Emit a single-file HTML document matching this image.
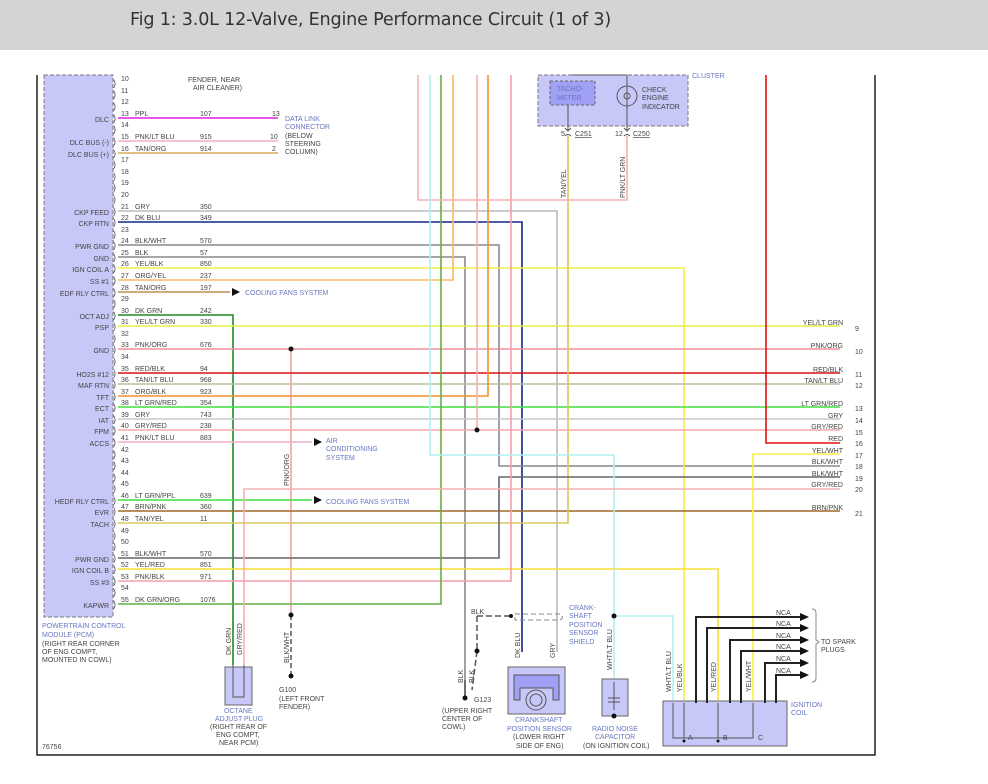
<!DOCTYPE html>
<html><head><meta charset="utf-8"><style>
html,body{margin:0;padding:0;background:#fff;width:988px;height:784px;overflow:hidden}
.hdr{position:absolute;left:0;top:0;width:988px;height:50px;background:#d4d4d4}
.hdr span{position:absolute;left:130px;top:10px;font:17.6px "DejaVu Sans","Liberation Sans",sans-serif;color:#333;letter-spacing:-0.2px}
svg{position:absolute;left:0;top:0}
text{font-family:"Liberation Sans",sans-serif;font-size:7px;fill:#444}
.b{fill:#6878c0}
.r{text-anchor:end}
</style></head><body>
<div class="hdr"><span>Fig 1: 3.0L 12-Valve, Engine Performance Circuit (1 of 3)</span></div>
<svg width="988" height="784" viewBox="0 0 988 784">
<g fill="none">
<path d="M37 75V755H875V75" stroke="#222" stroke-width="1.5"/>
<rect x="44" y="75" width="69" height="542" fill="#c8c8f8" stroke="#777" stroke-dasharray="4,2"/>
<rect x="538" y="75" width="150" height="51" fill="#c8c8f8" stroke="#777" stroke-dasharray="4,2"/>
<rect x="550" y="81" width="45" height="24" fill="#a0a0f4" stroke="#666" stroke-dasharray="3,2"/>
<path d="M572 75H627M568 105V130M627 75V130" stroke="#555"/>
<circle cx="627" cy="96" r="10" stroke="#555"/>
<circle cx="627" cy="96" r="3" stroke="#555"/>
<path d="M565 128l3 3 3-3M624 128l3 3 3-3M565 136q3-3 6 0M624 136q3-3 6 0" stroke="#555"/>

<g stroke-width="1.6">
<path d="M118 118H278" stroke="#e020e0"/>
<path d="M118 141H278" stroke="#f4b0c0"/>
<path d="M118 153H278" stroke="#d8a860"/>
<path d="M118 211H557V652" stroke="#bbb"/>
<path d="M118 222H522V652" stroke="#102888"/>
<path d="M118 245H499V466H840" stroke="#888"/>
<path d="M118 257H465V700" stroke="#888"/>
<path d="M118 268H684V700" stroke="#f0f040"/>
<path d="M118 280H453V75" stroke="#f8b860"/>
<path d="M118 292H230" stroke="#c09050"/>
<path d="M118 315H233V665" stroke="#208a20"/>
<path d="M118 326H840" stroke="#e8f040"/>
<path d="M118 349H840" stroke="#f4909a"/>
<path d="M291 349V615" stroke="#f4a0a0"/>
<path d="M118 373H840" stroke="#d81010"/>
<path d="M118 384H840" stroke="#b8c0a0"/>
<path d="M118 396H488V75" stroke="#f09030"/>
<path d="M118 407H840" stroke="#40e040"/>
<path d="M118 419H840" stroke="#c8c8c8"/>
<path d="M118 430H840" stroke="#f4a8a8"/>
<path d="M477 430V75" stroke="#f4b0b0"/>
<path d="M118 442H312" stroke="#f0b0c8"/>
<path d="M118 500H312" stroke="#40e040"/>
<path d="M118 511H840" stroke="#a06828"/>
<path d="M118 523H568V136" stroke="#d8c860"/>
<path d="M118 558H499V477H840" stroke="#666"/>
<path d="M118 569H718V700" stroke="#f8e030"/>
<path d="M118 581H511V75" stroke="#f4a0a8"/>
<path d="M118 604H441V75" stroke="#60b040"/>
<path d="M418 75V200H627V136" stroke="#f4b0b0"/>
<path d="M430 75V455H614V616H673V700" stroke="#b0f0f0"/>
<path d="M614 616V682" stroke="#b0f0f0"/>
<path d="M244 665V489H840" stroke="#f4b0b0"/>
<path d="M766 75V443H840" stroke="#e01010"/>
<path d="M840 454H753V700" stroke="#f8f040"/>
</g>
<path d="M291 615V676" stroke="#555" stroke-width="1.5" stroke-dasharray="5,3"/>
<path d="M477 616H511M477 616V651M477 651L472 690" stroke="#555" stroke-width="1.5" stroke-dasharray="6,3"/>
<path d="M465 680V700" stroke="#555" stroke-width="1.5"/>
<path d="M515 614H560q5 3 0 6H515z" stroke="#888" stroke-dasharray="5,3"/>
<rect x="225" y="667" width="27" height="38" fill="#c8c8f8" stroke="#666"/>
<path d="M233 665V697H244V665" stroke="#555"/>
<rect x="508" y="667" width="57" height="47" fill="#c8c8f8" stroke="#666"/>
<path d="M514 675H559V700H553V688H520V700H514Z" fill="#a0a0f4" stroke="#555"/>
<circle cx="536" cy="700" r="10" fill="#c8c8f8" stroke="#555"/>
<circle cx="536" cy="700" r="6" stroke="#555"/>
<rect x="602" y="679" width="26" height="37" fill="#c8c8f8" stroke="#666"/>
<path d="M614 682V710M608 698H620M608 702H620" stroke="#555"/>
<rect x="663" y="701" width="124" height="45" fill="#c8c8f8" stroke="#666"/>
<path d="M673 703V738H753V703M684 703V738M718 703V738" stroke="#555"/>
<g stroke="#222" stroke-width="2">
<path d="M696 703V617H806M707 703V628H806M730 703V640H806M741 703V651H806M765 703V663H806M776 703V675H806"/>
</g>
<g fill="#111">
<path d="M800 613l9 4-9 4zM800 624l9 4-9 4zM800 636l9 4-9 4zM800 647l9 4-9 4zM800 659l9 4-9 4zM800 671l9 4-9 4z"/>
<path d="M232 288l8 4-8 4zM314 438l8 4-8 4zM314 496l8 4-8 4z"/>
<circle cx="291" cy="349" r="2.5"/><circle cx="291" cy="615" r="2.5"/><circle cx="477" cy="430" r="2.5"/>
<circle cx="477" cy="651" r="2.5"/><circle cx="511" cy="616" r="2"/><circle cx="614" cy="616" r="2.5"/>
<circle cx="291" cy="676" r="2.5"/><circle cx="465" cy="698" r="2.5"/><circle cx="614" cy="716" r="2.5"/>
<circle cx="684" cy="741" r="1.5"/><circle cx="718" cy="741" r="1.5"/>
</g>
<path d="M812 609q4 0 4 4V640l3 2-3 2V678q0 4-4 4" stroke="#888"/>
</g>

<g>
<text x="121" y="81">10</text><text x="121" y="93">11</text><text x="121" y="104">12</text><text x="121" y="116">13</text>
<text x="121" y="127">14</text><text x="121" y="139">15</text><text x="121" y="151">16</text><text x="121" y="162">17</text>
<text x="121" y="174">18</text><text x="121" y="185">19</text><text x="121" y="197">20</text><text x="121" y="209">21</text>
<text x="121" y="220">22</text><text x="121" y="232">23</text><text x="121" y="243">24</text><text x="121" y="255">25</text>
<text x="121" y="266">26</text><text x="121" y="278">27</text><text x="121" y="290">28</text><text x="121" y="301">29</text>
<text x="121" y="313">30</text><text x="121" y="324">31</text><text x="121" y="336">32</text><text x="121" y="347">33</text>
<text x="121" y="359">34</text><text x="121" y="371">35</text><text x="121" y="382">36</text><text x="121" y="394">37</text>
<text x="121" y="405">38</text><text x="121" y="417">39</text><text x="121" y="428">40</text><text x="121" y="440">41</text>
<text x="121" y="452">42</text><text x="121" y="463">43</text><text x="121" y="475">44</text><text x="121" y="486">45</text>
<text x="121" y="498">46</text><text x="121" y="509">47</text><text x="121" y="521">48</text><text x="121" y="533">49</text>
<text x="121" y="544">50</text><text x="121" y="556">51</text><text x="121" y="567">52</text><text x="121" y="579">53</text>
<text x="121" y="590">54</text><text x="121" y="602">55</text>
</g>
<g>
<text x="113" y="86" style="font-size:9px">)</text><text x="113" y="97" style="font-size:9px">)</text><text x="113" y="109" style="font-size:9px">)</text><text x="113" y="121" style="font-size:9px">)</text>
<text x="113" y="132" style="font-size:9px">)</text><text x="113" y="144" style="font-size:9px">)</text><text x="113" y="156" style="font-size:9px">)</text><text x="113" y="167" style="font-size:9px">)</text>
<text x="113" y="179" style="font-size:9px">)</text><text x="113" y="190" style="font-size:9px">)</text><text x="113" y="202" style="font-size:9px">)</text><text x="113" y="214" style="font-size:9px">)</text>
<text x="113" y="225" style="font-size:9px">)</text><text x="113" y="237" style="font-size:9px">)</text><text x="113" y="248" style="font-size:9px">)</text><text x="113" y="260" style="font-size:9px">)</text>
<text x="113" y="271" style="font-size:9px">)</text><text x="113" y="283" style="font-size:9px">)</text><text x="113" y="295" style="font-size:9px">)</text><text x="113" y="306" style="font-size:9px">)</text>
<text x="113" y="318" style="font-size:9px">)</text><text x="113" y="329" style="font-size:9px">)</text><text x="113" y="341" style="font-size:9px">)</text><text x="113" y="352" style="font-size:9px">)</text>
<text x="113" y="364" style="font-size:9px">)</text><text x="113" y="376" style="font-size:9px">)</text><text x="113" y="387" style="font-size:9px">)</text><text x="113" y="399" style="font-size:9px">)</text>
<text x="113" y="410" style="font-size:9px">)</text><text x="113" y="422" style="font-size:9px">)</text><text x="113" y="433" style="font-size:9px">)</text><text x="113" y="445" style="font-size:9px">)</text>
<text x="113" y="457" style="font-size:9px">)</text><text x="113" y="468" style="font-size:9px">)</text><text x="113" y="480" style="font-size:9px">)</text><text x="113" y="491" style="font-size:9px">)</text>
<text x="113" y="503" style="font-size:9px">)</text><text x="113" y="514" style="font-size:9px">)</text><text x="113" y="526" style="font-size:9px">)</text><text x="113" y="538" style="font-size:9px">)</text>
<text x="113" y="549" style="font-size:9px">)</text><text x="113" y="561" style="font-size:9px">)</text><text x="113" y="572" style="font-size:9px">)</text><text x="113" y="584" style="font-size:9px">)</text>
<text x="113" y="595" style="font-size:9px">)</text><text x="113" y="607" style="font-size:9px">)</text>
</g>
<g>
<text class="r" x="109" y="122">DLC</text><text class="r" x="109" y="145">DLC BUS (-)</text><text class="r" x="109" y="157">DLC BUS (+)</text>
<text class="r" x="109" y="215">CKP FEED</text><text class="r" x="109" y="226">CKP RTN</text><text class="r" x="109" y="249">PWR GND</text>
<text class="r" x="109" y="261">GND</text><text class="r" x="109" y="272">IGN COIL A</text><text class="r" x="109" y="284">SS #1</text>
<text class="r" x="109" y="296">EDF RLY CTRL</text><text class="r" x="109" y="319">OCT ADJ</text><text class="r" x="109" y="330">PSP</text>
<text class="r" x="109" y="353">GND</text><text class="r" x="109" y="377">HO2S #12</text><text class="r" x="109" y="388">MAF RTN</text>
<text class="r" x="109" y="400">TFT</text><text class="r" x="109" y="411">ECT</text><text class="r" x="109" y="423">IAT</text>
<text class="r" x="109" y="434">FPM</text><text class="r" x="109" y="446">ACCS</text><text class="r" x="109" y="504">HEDF RLY CTRL</text>
<text class="r" x="109" y="515">EVR</text><text class="r" x="109" y="527">TACH</text><text class="r" x="109" y="562">PWR GND</text>
<text class="r" x="109" y="573">IGN COIL B</text><text class="r" x="109" y="585">SS #3</text><text class="r" x="109" y="608">KAPWR</text>
</g>
<g>
<text x="135" y="116">PPL</text><text x="200" y="116">107</text>
<text x="135" y="139">PNK/LT BLU</text><text x="200" y="139">915</text>
<text x="135" y="151">TAN/ORG</text><text x="200" y="151">914</text>
<text x="135" y="209">GRY</text><text x="200" y="209">350</text>
<text x="135" y="220">DK BLU</text><text x="200" y="220">349</text>
<text x="135" y="243">BLK/WHT</text><text x="200" y="243">570</text>
<text x="135" y="255">BLK</text><text x="200" y="255">57</text>
<text x="135" y="266">YEL/BLK</text><text x="200" y="266">850</text>
<text x="135" y="278">ORG/YEL</text><text x="200" y="278">237</text>
<text x="135" y="290">TAN/ORG</text><text x="200" y="290">197</text>
<text x="135" y="313">DK GRN</text><text x="200" y="313">242</text>
<text x="135" y="324">YEL/LT GRN</text><text x="200" y="324">330</text>
<text x="135" y="347">PNK/ORG</text><text x="200" y="347">676</text>
<text x="135" y="371">RED/BLK</text><text x="200" y="371">94</text>
<text x="135" y="382">TAN/LT BLU</text><text x="200" y="382">968</text>
<text x="135" y="394">ORG/BLK</text><text x="200" y="394">923</text>
<text x="135" y="405">LT GRN/RED</text><text x="200" y="405">354</text>
<text x="135" y="417">GRY</text><text x="200" y="417">743</text>
<text x="135" y="428">GRY/RED</text><text x="200" y="428">238</text>
<text x="135" y="440">PNK/LT BLU</text><text x="200" y="440">883</text>
<text x="135" y="498">LT GRN/PPL</text><text x="200" y="498">639</text>
<text x="135" y="509">BRN/PNK</text><text x="200" y="509">360</text>
<text x="135" y="521">TAN/YEL</text><text x="200" y="521">11</text>
<text x="135" y="556">BLK/WHT</text><text x="200" y="556">570</text>
<text x="135" y="567">YEL/RED</text><text x="200" y="567">851</text>
<text x="135" y="579">PNK/BLK</text><text x="200" y="579">971</text>
<text x="135" y="602">DK GRN/ORG</text><text x="200" y="602">1076</text>
<text x="188" y="82">FENDER, NEAR</text><text x="193" y="90">AIR CLEANER)</text>
<text x="272" y="116">13</text><text x="270" y="139">10</text><text x="272" y="151">2</text>
<text class="b" x="285" y="121">DATA LINK</text><text class="b" x="285" y="129">CONNECTOR</text>
<text x="285" y="138">(BELOW</text><text x="285" y="146">STEERING</text><text x="285" y="154">COLUMN)</text>
<text class="b" x="245" y="295">COOLING FANS SYSTEM</text>
<text class="b" x="326" y="443">AIR</text><text class="b" x="326" y="451">CONDITIONING</text><text class="b" x="326" y="460">SYSTEM</text>
<text class="b" x="326" y="504">COOLING FANS SYSTEM</text>
<text class="r" x="843" y="325">YEL/LT GRN</text><text x="855" y="331">9</text>
<text class="r" x="843" y="348">PNK/ORG</text><text x="855" y="354">10</text>
<text class="r" x="843" y="372">RED/BLK</text><text x="855" y="377">11</text>
<text class="r" x="843" y="383">TAN/LT BLU</text><text x="855" y="388">12</text>
<text class="r" x="843" y="406">LT GRN/RED</text><text x="855" y="411">13</text>
<text class="r" x="843" y="418">GRY</text><text x="855" y="423">14</text>
<text class="r" x="843" y="429">GRY/RED</text><text x="855" y="435">15</text>
<text class="r" x="843" y="441">RED</text><text x="855" y="446">16</text>
<text class="r" x="843" y="453">YEL/WHT</text><text x="855" y="458">17</text>
<text class="r" x="843" y="464">BLK/WHT</text><text x="855" y="469">18</text>
<text class="r" x="843" y="476">BLK/WHT</text><text x="855" y="481">19</text>
<text class="r" x="843" y="487">GRY/RED</text><text x="855" y="492">20</text>
<text class="r" x="843" y="510">BRN/PNK</text><text x="855" y="516">21</text>
<text class="b" x="557" y="91">TACHO-</text><text class="b" x="557" y="100">METER</text>
<text x="642" y="92">CHECK</text><text x="642" y="100">ENGINE</text><text x="642" y="109">INDICATOR</text>
<text class="b" x="692" y="78">CLUSTER</text>
<text x="561" y="136">5</text><text x="575" y="136" text-decoration="underline">C251</text>
<text x="615" y="136">12</text><text x="633" y="136" text-decoration="underline">C250</text>
<text transform="translate(566,198) rotate(-90)">TAN/YEL</text>
<text transform="translate(625,198) rotate(-90)">PNK/LT GRN</text>
<text transform="translate(289,486) rotate(-90)">PNK/ORG</text>
<text class="b" x="42" y="628">POWERTRAIN CONTROL</text><text class="b" x="42" y="637">MODULE (PCM)</text>
<text x="42" y="646">(RIGHT REAR CORNER</text><text x="42" y="654">OF ENG COMPT,</text><text x="42" y="662">MOUNTED IN COWL)</text>
<text x="42" y="749">76756</text>
<text transform="translate(231,655) rotate(-90)">DK GRN</text>
<text transform="translate(242,655) rotate(-90)">GRY/RED</text>
<text transform="translate(289,663) rotate(-90)">BLK/WHT</text>
<text class="b" x="224" y="713">OCTANE</text><text class="b" x="215" y="721">ADJUST PLUG</text>
<text x="210" y="729">(RIGHT REAR OF</text><text x="216" y="737">ENG COMPT,</text><text x="219" y="745">NEAR PCM)</text>
<text x="279" y="692">G100</text><text x="279" y="701">(LEFT FRONT</text><text x="279" y="709">FENDER)</text>
<text x="471" y="614">BLK</text>
<text transform="translate(463,683) rotate(-90)">BLK</text>
<text transform="translate(474,683) rotate(-90)">BLK</text>
<text x="474" y="702">G123</text>
<text x="442" y="713">(UPPER RIGHT</text><text x="442" y="721">CENTER OF</text><text x="442" y="729">COWL)</text>
<text class="b" x="569" y="610">CRANK-</text><text class="b" x="569" y="618">SHAFT</text><text class="b" x="569" y="627">POSITION</text>
<text class="b" x="569" y="635">SENSOR</text><text class="b" x="569" y="644">SHIELD</text>
<text transform="translate(520,658) rotate(-90)">DK BLU</text>
<text transform="translate(555,658) rotate(-90)">GRY</text>
<text transform="translate(612,670) rotate(-90)">WHT/LT BLU</text>
<text class="b" x="515" y="722">CRANKSHAFT</text><text class="b" x="507" y="731">POSITION SENSOR</text>
<text x="513" y="739">(LOWER RIGHT</text><text x="516" y="748">SIDE OF ENG)</text>
<text class="b" x="592" y="731">RADIO NOISE</text><text class="b" x="595" y="739">CAPACITOR</text>
<text x="583" y="748">(ON IGNITION COIL)</text>
<text transform="translate(671,692) rotate(-90)">WHT/LT BLU</text>
<text transform="translate(682,692) rotate(-90)">YEL/BLK</text>
<text transform="translate(716,692) rotate(-90)">YEL/RED</text>
<text transform="translate(751,692) rotate(-90)">YEL/WHT</text>
<text x="776" y="615">NCA</text><text x="776" y="626">NCA</text><text x="776" y="638">NCA</text>
<text x="776" y="649">NCA</text><text x="776" y="661">NCA</text><text x="776" y="673">NCA</text>
<text x="821" y="644">TO SPARK</text><text x="821" y="652">PLUGS</text>
<text class="b" x="791" y="707">IGNITION</text><text class="b" x="791" y="715">COIL</text>
<text x="688" y="740">A</text><text x="723" y="740">B</text><text x="758" y="740">C</text>
</g>
</svg>
</body></html>
